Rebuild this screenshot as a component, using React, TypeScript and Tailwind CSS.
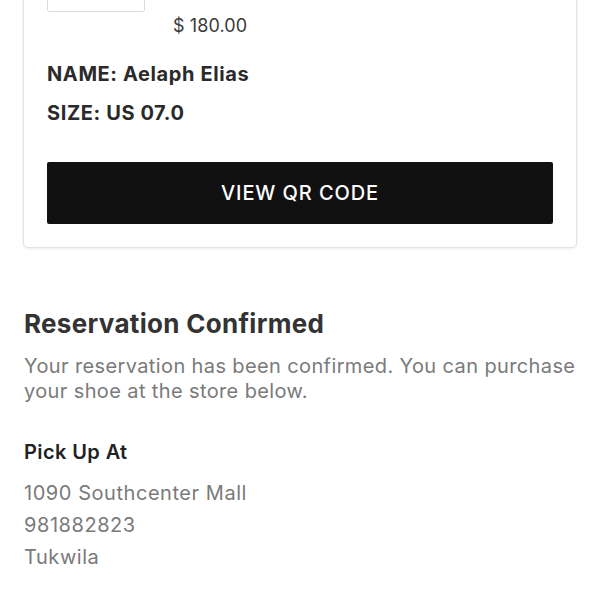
import React from "react";

const font = { fontFamily: "Inter, 'Noto Sans', sans-serif" };

export default function App() {
  return (
    <div className="w-[600px] h-[600px] overflow-hidden bg-white" style={font}>
      <div className="-mt-[121px] px-[23px]">
        <div className="rounded-[5px] border border-[#e2e2e2] shadow-[0_1px_3px_rgba(0,0,0,0.08)] bg-white px-[23px] pt-[24px] pb-[23px]">
          <div className="flex items-start gap-[28px]">
            <div className="w-[98px] h-[108px] border border-[#dcdcdc] rounded-[2px] shrink-0" />
            <div className="pt-[110px] text-[18px] leading-[24px] tracking-[0.1px] text-[#3a3a3a]">$ 180.00</div>
          </div>
          <div className="mt-[22px] text-[20px] leading-[28px] font-bold tracking-[0.6px] text-[#2a2a2a]">
            NAME: Aelaph Elias
          </div>
          <div className="mt-[11px] text-[20px] leading-[28px] font-bold tracking-[0.6px] text-[#2a2a2a]">
            SIZE: US 07.0
          </div>
          <button className="mt-[35px] w-full h-[62px] bg-[#111111] rounded-[2px] text-white text-[20px] font-medium tracking-[0.9px]">
            VIEW QR CODE
          </button>
        </div>

        <div className="pl-px">
          <h2 className="mt-[60px] text-[26px] leading-[32px] font-bold tracking-[0.3px] text-[#333333]">Reservation Confirmed</h2>
          <p className="mt-[14px] text-[20px] leading-[25px] tracking-[0.38px] text-[#7a7a7a]">
            Your reservation has been confirmed. You can purchase your shoe at the store below.
          </p>
          <h3 className="mt-[34px] text-[20px] leading-[28px] font-semibold tracking-[0.4px] text-[#222222]">Pick Up At</h3>
          <div className="mt-[11px] text-[20px] leading-[32px] tracking-[0.55px] text-[#7a7a7a]">
            <div>1090 Southcenter Mall</div>
            <div>981882823</div>
            <div>Tukwila</div>
          </div>
        </div>
      </div>
    </div>
  );
}
